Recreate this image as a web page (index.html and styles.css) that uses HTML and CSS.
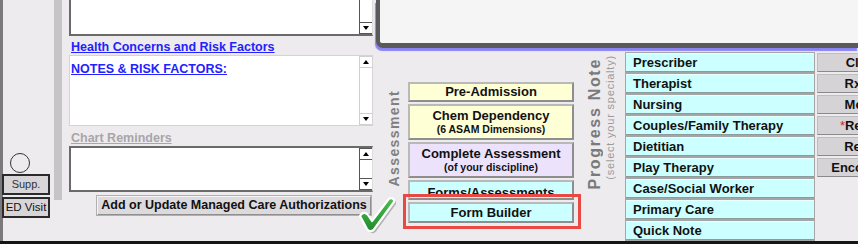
FILE: index.html
```html
<!DOCTYPE html>
<html lang="en">
<head>
    <meta charset="UTF-8">
    <title>Chart</title>
    <link rel="stylesheet" href="styles.css">
</head>
<body>
    <div class="screen">
        <div class="edge"></div>

        <div class="left-col">
            <div class="radio"></div>
            <div class="small-btn supp">Supp.</div>
            <div class="small-btn">ED Visit</div>
        </div>
        <div class="splitter"></div>

        <div class="mid">
            <div class="memo memo-dark memo-top">
                <div class="memo-body"></div>
                <div class="sbar">
                    <div class="sbar-fill"></div>
                    <div class="arrow"><span class="tri-down"></span></div>
                </div>
            </div>
            <div class="caption"><a class="link">Health Concerns and Risk Factors</a></div>
            <div class="memo memo-light memo-notes">
                <div class="memo-body"><a class="link notes">NOTES &amp; RISK FACTORS:</a></div>
                <div class="sbar">
                    <div class="arrow"><span class="tri-up"></span></div>
                    <div class="sbar-fill"></div>
                    <div class="arrow"><span class="tri-down"></span></div>
                </div>
            </div>
            <div class="caption caption-gray"><a class="link gray">Chart Reminders</a></div>
            <div class="memo memo-dark memo-chart">
                <div class="memo-body"></div>
                <div class="sbar">
                    <div class="arrow"><span class="tri-up"></span></div>
                    <div class="sbar-fill"></div>
                    <div class="arrow"><span class="tri-down"></span></div>
                </div>
            </div>
            <div class="auth-btn">Add or Update Managed Care Authorizations</div>
        </div>

        <div class="right">
            <div class="panel"></div>
            <div class="lower">
                <div class="assess-label"><span class="vtext">Assessment</span></div>
                <div class="assess">
                    <div class="abtn yellow">Pre-Admission</div>
                    <div class="abtn yellow tall">Chem Dependency<small>(6 ASAM Dimensions)</small></div>
                    <div class="abtn lavender tall">Complete Assessment<small>(of your discipline)</small></div>
                    <div class="abtn cyan forms">Forms/Assessments</div>
                    <div class="abtn cyan builder">Form Builder</div>
                </div>
                <div class="pn-label">
                    <span class="vtext pn-title">Progress Note</span>
                    <span class="vtext pn-sub">(select your specialty)</span>
                </div>
                <div class="pn-list">
                    <div class="pn-row">Prescriber</div>
                    <div class="pn-row">Therapist</div>
                    <div class="pn-row">Nursing</div>
                    <div class="pn-row">Couples/Family Therapy</div>
                    <div class="pn-row">Dietitian</div>
                    <div class="pn-row">Play Therapy</div>
                    <div class="pn-row">Case/Social Worker</div>
                    <div class="pn-row">Primary Care</div>
                    <div class="pn-row">Quick Note</div>
                </div>
                <div class="side">
                    <div class="sbtn">Claims</div>
                    <div class="sbtn">Rx Hist</div>
                    <div class="sbtn">Memos</div>
                    <div class="sbtn"><span class="req">*</span>Referral</div>
                    <div class="sbtn">Recalls</div>
                    <div class="sbtn">Encounters</div>
                </div>
            </div>
        </div>
    </div>

    <!-- annotation overlays -->
    <div class="highlight"></div>
    <svg class="check" viewBox="0 0 40 38" width="40" height="38">
        <defs>
            <linearGradient id="g" x1="0" y1="0" x2="0" y2="1">
                <stop offset="0" stop-color="#4cc04f"/>
                <stop offset="1" stop-color="#1f8a2c"/>
            </linearGradient>
        </defs>
        <path d="M3 20 C5 16 9 16 11 19 L15 25 L31 4 C33 1 38 2 37 6 L18 32 C16 36 12 36 10 33 Z"
              fill="#000" opacity="0.25" transform="translate(2 2)"/>
        <path d="M3 20 C5 16 9 16 11 19 L15 25 L31 4 C33 1 38 2 37 6 L18 32 C16 36 12 36 10 33 Z"
              fill="url(#g)" stroke="#fff" stroke-width="2.2" stroke-linejoin="round"/>
    </svg>
</body>
</html>
```

FILE: styles.css
```css
body {
    margin: 0;
    width: 858px;
    height: 244px;
    overflow: hidden;
    position: relative;
    background-color: #eeebee;
    font-family: 'Liberation Sans', Arial, sans-serif;
    color: #111111;
}

.screen {
    display: flex;
    height: 241px;
    border-bottom: 3px solid #151515;
    overflow: hidden;
}

.edge {
    width: 3px;
    background-color: #7b797b;
    flex-shrink: 0;
}

/* left strip */
.left-col {
    width: 51px;
    flex-shrink: 0;
    display: flex;
    flex-direction: column;
    padding-top: 153px;
    position: relative;
    z-index: 1;
}

.radio {
    width: 18px;
    height: 18px;
    border: 1.5px solid #333;
    border-radius: 50%;
    margin-left: 7px;
    margin-bottom: 1px;
}

.small-btn {
    width: 44px;
    height: 17px;
    border: 2px solid #2a2a2a;
    background-color: #d8d5d8;
    font-size: 11.5px;
    line-height: 17px;
    text-align: center;
    margin-left: -1px;
    margin-bottom: 2px;
}

.small-btn.supp {
    font-size: 11px;
    color: #333;
}

.splitter {
    width: 8px;
    height: 200px;
    background-color: #c6c4c6;
    flex-shrink: 0;
    margin-right: 7px;
}

/* middle column */
.mid {
    width: 304px;
    flex-shrink: 0;
    display: flex;
    flex-direction: column;
}

.memo {
    display: flex;
    background-color: #ffffff;
    box-sizing: border-box;
}

.memo-dark {
    border: 2px solid #6a6a6a;
}

.memo-light {
    border: 1px solid #d6d3d6;
}

.memo-top {
    height: 36px;
    border-top: none;
    border-right: 1px solid #dddddd;
}

.memo-notes {
    height: 71px;
}

.memo-chart {
    height: 46px;
    border-right: 1px solid #dddddd;
}

.memo-body {
    flex: 1;
    padding: 3px 1px;
}

.sbar {
    width: 12px;
    border-left: 1px solid #555;
    display: flex;
    flex-direction: column;
}

.memo-light .sbar {
    border-left-color: #d0d0d0;
}

.sbar-fill {
    flex: 1;
}

.arrow {
    height: 10px;
    display: flex;
    align-items: center;
    justify-content: center;
    border-top: 1px solid #555;
    border-bottom: 1px solid #555;
}

.memo-light .arrow {
    border-color: #d0d0d0;
}

.tri-down {
    width: 0;
    height: 0;
    border-left: 3.5px solid transparent;
    border-right: 3.5px solid transparent;
    border-top: 4px solid #000;
}

.tri-up {
    width: 0;
    height: 0;
    border-left: 3.5px solid transparent;
    border-right: 3.5px solid transparent;
    border-bottom: 4px solid #000;
}

.caption {
    height: 19px;
    padding: 4px 0 0 2px;
    box-sizing: border-box;
    font-size: 12.5px;
    line-height: 14px;
}

.caption-gray {
    height: 20px;
    padding-top: 5px;
}

.link {
    font-weight: bold;
    color: #2222ff;
    text-decoration: underline;
}

.link.notes {
    font-size: 12.5px;
}

.link.gray {
    color: #a9a5a9;
}

.auth-btn {
    margin: 4px 0 0 28px;
    width: 274px;
    height: 19px;
    box-sizing: border-box;
    background-color: #dddadd;
    border: 1px solid;
    border-color: #f4f4f4 #8f8f8f #8f8f8f #f4f4f4;
    outline: 1px solid #b0b0b0;
    font-size: 12.5px;
    font-weight: bold;
    line-height: 17px;
    text-align: center;
    white-space: nowrap;
}

/* right area */
.right {
    flex: 1;
    margin-left: 3px;
    display: flex;
    flex-direction: column;
    min-width: 0;
}

.panel {
    height: 43px;
    flex-shrink: 0;
    background-color: #f5f5f5;
    border-left: 4px solid #5a5a5a;
    border-bottom: 5px solid #5a5a5a;
    border-bottom-left-radius: 7px;
    box-shadow: -1px 3px 1px #8a84f2;
}

.lower {
    display: flex;
    margin-top: 4px;
    height: 189px;
    overflow: hidden;
}

.lower > div {
    flex-shrink: 0;
}

.vtext {
    writing-mode: vertical-rl;
    transform: rotate(180deg);
    white-space: nowrap;
}

.assess-label {
    width: 17px;
    margin-left: 10px;
    margin-right: 5px;
    padding-top: 38px;
    font-size: 14px;
    font-weight: bold;
    letter-spacing: 1.4px;
    color: #808080;
}

.assess {
    width: 166px;
    padding-top: 30px;
    display: flex;
    flex-direction: column;
    gap: 2px;
}

.abtn {
    height: 20px;
    box-sizing: border-box;
    border: 2px solid;
    border-color: #b9b9b9 #8e8e8e #8e8e8e #b9b9b9;
    font-size: 13px;
    font-weight: bold;
    text-align: center;
    line-height: 16px;
    display: flex;
    flex-direction: column;
    justify-content: center;
    white-space: nowrap;
}

.abtn.tall {
    height: 36px;
    line-height: 15px;
}

.abtn small {
    font-size: 10.5px;
    line-height: 13px;
}

.yellow {
    background-color: #ffffd6;
}

.lavender {
    background-color: #ece2fb;
}

.cyan {
    background-color: #ccffff;
}

.abtn.forms {
    justify-content: flex-start;
    padding-top: 3px;
    overflow: hidden;
}

.abtn.builder {
    height: 21px;
}

.pn-label {
    width: 51px;
    display: flex;
    padding-left: 12px;
    box-sizing: border-box;
}

.pn-title {
    font-size: 16px;
    font-weight: bold;
    letter-spacing: 1.7px;
    color: #7a7a7a;
    margin-top: 6px;
    align-self: flex-start;
    line-height: 18px;
}

.pn-sub {
    font-size: 11px;
    letter-spacing: 0.8px;
    color: #9a9a9a;
    margin-top: 3px;
    margin-left: 1px;
    align-self: flex-start;
    line-height: 10px;
}

.pn-list {
    width: 190px;
    box-sizing: border-box;
    background-color: #a5a5a5;
    padding: 1px;
    display: flex;
    flex-direction: column;
    gap: 2px;
}

.pn-row {
    height: 19px;
    box-sizing: border-box;
    background-color: #ccffff;
    border-top: 1px solid #e8ffff;
    border-bottom: 1px solid #8c9c9c;
    padding-left: 7px;
    font-size: 13px;
    font-weight: bold;
    line-height: 17px;
    white-space: nowrap;
}

.side {
    width: 100px;
    margin-left: 2px;
    padding-top: 1px;
    display: flex;
    flex-direction: column;
    gap: 2px;
}

.sbtn {
    height: 19px;
    box-sizing: border-box;
    background-color: #d6d3d6;
    border: 1px solid;
    border-color: #bdbdbd #8a8a8a #8a8a8a #bdbdbd;
    font-size: 13px;
    font-weight: bold;
    line-height: 17px;
    text-align: center;
    white-space: nowrap;
}

.req {
    color: #e02020;
    font-weight: normal;
}

/* overlays */
.highlight {
    position: absolute;
    left: 403px;
    top: 194px;
    width: 178px;
    height: 35px;
    box-sizing: border-box;
    border: 3px solid #e84a43;
}

.check {
    position: absolute;
    left: 357px;
    top: 196px;
}
```
